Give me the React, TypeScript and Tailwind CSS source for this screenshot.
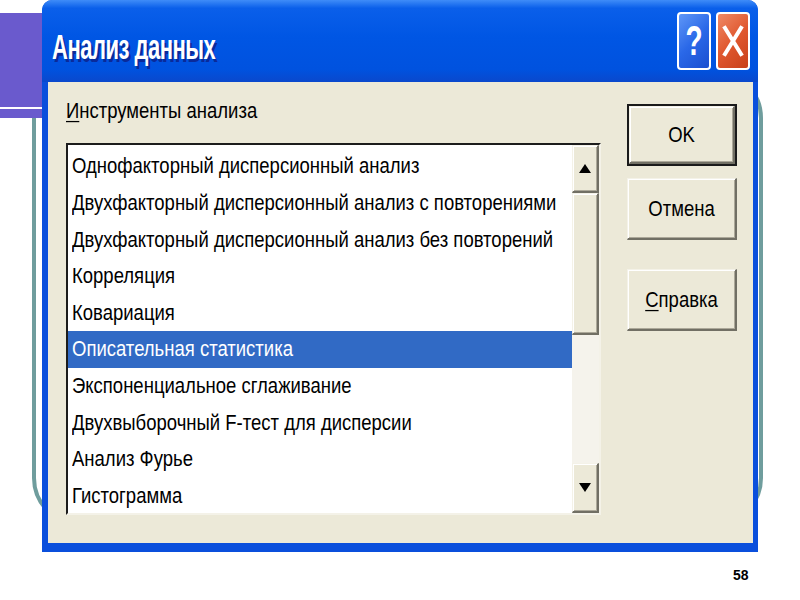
import React from 'react';

const tools = [
  'Однофакторный дисперсионный анализ',
  'Двухфакторный дисперсионный анализ с повторениями',
  'Двухфакторный дисперсионный анализ без повторений',
  'Корреляция',
  'Ковариация',
  'Описательная статистика',
  'Экспоненциальное сглаживание',
  'Двухвыборочный F-тест для дисперсии',
  'Анализ Фурье',
  'Гистограмма',
];

const raised =
  'border-t border-l border-r-2 border-b-2 border-t-[#f4f2e8] border-l-[#f4f2e8] border-r-[#716f64] border-b-[#716f64] shadow-[inset_1px_1px_0_#ffffff,inset_-1px_-1px_0_#aca899] bg-[#ece9d8]';

const Stretch = ({ children, className = '' }: { children: React.ReactNode; className?: string }) => (
  <span className={`inline-block origin-center scale-y-[1.24] ${className}`}>{children}</span>
);

const DialogButton = ({
  label,
  underline,
  isDefault,
  className = '',
}: {
  label: string;
  underline?: boolean;
  isDefault?: boolean;
  className?: string;
}) => (
  <div className={`h-[62px] w-[110px] ${isDefault ? 'border-2 border-[#1a1a1a]' : ''} ${className}`}>
    <div className={`flex h-full w-full items-center justify-center text-[18.5px] text-black ${raised}`}>
      <Stretch>
        {underline ? (
          <>
            <span className="underline decoration-1 underline-offset-2">{label[0]}</span>
            {label.slice(1)}
          </>
        ) : (
          label
        )}
      </Stretch>
    </div>
  </div>
);

export default function App() {
  return (
    <div className="relative h-[600px] w-[800px] overflow-hidden bg-white font-['Liberation_Sans',Arial,sans-serif]">
      {/* slide decorations */}
      <div className="absolute left-[32px] top-[70px] h-[456px] w-[731px] rounded-[48px] border-4 border-[#6f9d9d]" />
      <div className="absolute left-0 top-[13px] flex h-[105px] w-[60px] flex-col bg-[#6a5acd]">
        <div className="h-[94px]" />
        <div className="h-[2px] bg-white" />
      </div>

      {/* dialog window */}
      <div className="absolute left-[42px] top-0 flex h-[552px] w-[716px] flex-col rounded-t-[10px] bg-[#0a4fdc] pb-[9px] pl-[6px] pr-[5px]">
        <div className="-ml-[6px] -mr-[5px] flex h-[82px] items-center rounded-t-[10px] bg-[linear-gradient(180deg,#3f8cf8_0%,#0a5fea_10%,#0056e4_45%,#0052df_85%,#0a48cc_100%)] pl-[10px] pr-[8px]">
          <div className="flex-1 pt-[10px]">
            <span className="inline-block origin-center scale-y-[1.6] text-[22px] font-bold tracking-[-0.5px] text-white [text-shadow:2px_2px_0_#0a2a9a]">
              Анализ данных
            </span>
          </div>
          <div className="flex gap-[5px]">
            <div className="flex h-[58px] w-[34px] items-center justify-center rounded-[4px] border-2 border-white bg-[linear-gradient(135deg,#5f97f7_0%,#2a68e8_50%,#1a4fd0_100%)]">
              <span className="inline-block scale-y-[1.5] text-[28px] font-bold text-white">?</span>
            </div>
            <div className="flex h-[58px] w-[34px] items-center justify-center rounded-[4px] border-2 border-white bg-[linear-gradient(135deg,#ef8a66_0%,#e0582f_50%,#c8401a_100%)]">
              <svg width="22" height="34" viewBox="0 0 22 34">
                <path d="M3 4 L19 30 M19 4 L3 30" stroke="white" strokeWidth="4" strokeLinecap="square" />
              </svg>
            </div>
          </div>
        </div>

        <div className="flex flex-1 bg-[#ece9d8] pl-[18px]">
          {/* left column */}
          <div className="flex w-[535px] shrink-0 flex-col">
            <div className="flex h-[61px] items-start pt-[15px] text-[18.5px] text-black">
              <Stretch>
                <span className="underline decoration-1 underline-offset-2">И</span>нструменты анализа
              </Stretch>
            </div>
            <div className="flex h-[372px] w-[535px] border-2 border-t-[#1c1c1c] border-l-[#1c1c1c] border-r-[#f4f2e8] border-b-[#f4f2e8] bg-white">
              <div className="w-[504px] shrink-0 overflow-hidden pt-[3px]">
                {tools.map((t, i) => (
                  <div
                    key={t}
                    className={`flex h-[36.6px] items-center whitespace-nowrap pl-[4px] text-[18.5px] ${
                      i === 5 ? 'bg-[#316ac5] text-white' : 'text-black'
                    }`}
                  >
                    <Stretch>{t}</Stretch>
                  </div>
                ))}
              </div>
              <div className="flex w-[27px] shrink-0 flex-col">
                <div className={`flex h-[48px] items-center justify-center ${raised}`}>
                  <svg width="12" height="9" viewBox="0 0 12 9">
                    <path d="M6 0 L12 9 L0 9 Z" fill="black" />
                  </svg>
                </div>
                <div className={`h-[142px] ${raised}`} />
                <div className="flex-1 bg-[#f5f3ec]" />
                <div className={`flex h-[50px] items-center justify-center ${raised}`}>
                  <svg width="12" height="9" viewBox="0 0 12 9">
                    <path d="M0 0 L12 0 L6 9 Z" fill="black" />
                  </svg>
                </div>
              </div>
            </div>
          </div>

          {/* right column */}
          <div className="ml-[26px] flex flex-col pt-[22px]">
            <DialogButton label="OK" isDefault />
            <DialogButton label="Отмена" className="mt-[12px]" />
            <DialogButton label="Справка" underline className="mt-[29px]" />
          </div>
        </div>
      </div>

      <div className="absolute left-[733px] top-[565px] text-[14px] font-bold text-black">58</div>
    </div>
  );
}
